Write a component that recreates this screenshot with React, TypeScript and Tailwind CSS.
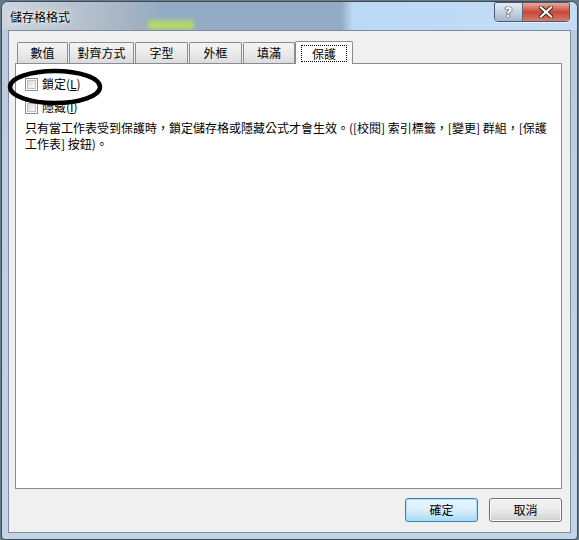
import React from 'react';

const tabs = [
  { label: '數值', w: 'w-[51px]' },
  { label: '對齊方式', w: 'w-[65px]' },
  { label: '字型', w: 'w-[53px]' },
  { label: '外框', w: 'w-[53px]' },
  { label: '填滿', w: 'w-[52px]' },
];

const CheckBox: React.FC = () => (
  <div className="w-[13px] h-[13px] border border-[#8e8f8f] bg-white p-[1px] shrink-0">
    <div className="w-full h-full border border-[#c2c2c2] bg-gradient-to-br from-[#dadada] to-[#fbfbfb]" />
  </div>
);

const Button: React.FC<{ label: string; primary?: boolean }> = ({ label, primary }) => (
  <button
    className={`w-[73px] h-[24px] rounded-[3px] border text-[12px] text-black flex items-center justify-center ${
      primary
        ? 'border-[#3c7fb1] shadow-[inset_0_0_0_1px_#a6e1f9] bg-gradient-to-b from-[#eaf6fd] via-[#d9f0fc] to-[#a7d9f5]'
        : 'border-[#707070] shadow-[inset_0_0_0_1px_#fbfbfb] bg-gradient-to-b from-[#f2f2f2] via-[#ebebeb] to-[#cfcfcf]'
    }`}
  >
    {label}
  </button>
);

export default function App() {
  return (
    <div className="w-[579px] h-[540px] bg-[#6b7a88] font-['Noto_Sans_CJK_TC','Noto_Sans',sans-serif] text-black overflow-hidden">
      <div className="relative w-[577px] h-[539px] ml-[1px] mt-[1px] rounded-t-[7px] rounded-b-[4px] border border-[#3e4c5a] bg-[linear-gradient(180deg,#b9cbdd_0%,#c2d4e6_100%)] overflow-hidden flex flex-col">
        {/* Title bar */}
        <div className="relative h-[28px] flex items-start justify-between bg-[linear-gradient(90deg,#ccd5de_0%,#b8c4d0_12%,#a5b3c2_22%,#93abc6_28%,#93abc6_59%,#bcd9f7_61%,#c4dcf5_100%)]">
          {/* background glow leaking through the glass */}
          <div className="absolute left-[146px] top-[18px] w-[46px] h-[10px] rounded-[3px] bg-[#b5d76c] blur-[2px]" />
          <span className="relative text-[12px] mt-[8px] ml-[8px] leading-[14px] [text-shadow:0_0_6px_#ffffff,0_0_3px_#ffffff]">儲存格格式</span>
          <div className="relative flex mr-[7px] rounded-b-[4px] rounded-t-[2px] border border-[#4b5a6a] overflow-hidden h-[20px] shadow-[0_1px_0_#ffffff80]">
            <div className="w-[28px] h-full flex items-center justify-center bg-gradient-to-b from-[#e3ebf3] via-[#c8d4e0] to-[#a4b6c9] border-r border-[#5d6c7c]">
              <span className="text-[14px] font-bold text-white leading-none [text-shadow:0_0_1px_#333,0_0_1px_#333,0_0_1px_#333]" style={{ fontFamily: 'DejaVu Sans, sans-serif' }}>?</span>
            </div>
            <div className="w-[46px] h-full flex items-center justify-center bg-gradient-to-b from-[#e9a99b] via-[#c7473a] to-[#d47a6b]">
              <svg width="14" height="12" viewBox="0 0 14 12">
                <path d="M2 1.5 L12 10.5 M12 1.5 L2 10.5" stroke="#3a2320" strokeWidth="4.2" strokeLinecap="square" />
                <path d="M2 1.5 L12 10.5 M12 1.5 L2 10.5" stroke="#ffffff" strokeWidth="2.2" strokeLinecap="square" />
              </svg>
            </div>
          </div>
        </div>

        {/* Client area */}
        <div className="relative mx-[6px] mb-[6px] flex-1 border border-[#7c8c9c] bg-[#f0f0f0] flex flex-col pl-[6px] pr-[8px]">
          {/* Tabs */}
          <div className="flex items-end h-[32px] pl-[2px] relative z-10">
            {tabs.map((t) => (
              <div
                key={t.label}
                className={`${t.w} h-[21px] mr-[1px] border border-b-0 border-[#898c95] rounded-t-[2px] bg-gradient-to-b from-[#f3f3f3] via-[#ebebeb] to-[#dcdcdc] flex items-center justify-center text-[12px] leading-none`}
              >
                {t.label}
              </div>
            ))}
            <div className="w-[58px] h-[23px] -ml-[1px] -mb-[1px] border border-b-0 border-[#898c95] rounded-t-[2px] bg-white flex items-center justify-center">
              <div className="w-[46px] h-[17px] mt-[1px] border border-dotted border-black flex items-center justify-center text-[12px] leading-none">
                保護
              </div>
            </div>
          </div>

          {/* Panel */}
          <div className="relative h-[426px] border border-[#898c95] bg-white pl-[9px] pt-[12px]">
            <div className="flex items-center gap-[4px] h-[16px]">
              <CheckBox />
              <span className="text-[12px] leading-[16px]">
                鎖定(<span className="underline">L</span>)
              </span>
            </div>
            <div className="flex items-center gap-[4px] h-[16px] mt-[7px]">
              <CheckBox />
              <span className="text-[12px] leading-[16px]">
                隱藏(<span className="underline">I</span>)
              </span>
            </div>
            <p className="text-[12px] leading-[16px] mt-[5px] whitespace-nowrap">
              只有當工作表受到保護時，鎖定儲存格或隱藏公式才會生效。([校閱] 索引標籤，[變更] 群組，[保護
              <br />
              工作表] 按鈕)。
            </p>

            {/* hand-drawn highlight ring */}
            <svg className="absolute left-[-9px] top-[3px]" width="104" height="42" viewBox="0 0 104 42">
              <ellipse cx="48" cy="20" rx="45" ry="16" fill="none" stroke="#000" strokeWidth="4.5" />
            </svg>
          </div>

          {/* Buttons */}
          <div className="flex justify-end gap-[11px] mt-[9px]">
            <Button label="確定" primary />
            <Button label="取消" />
          </div>
        </div>
      </div>
    </div>
  );
}
